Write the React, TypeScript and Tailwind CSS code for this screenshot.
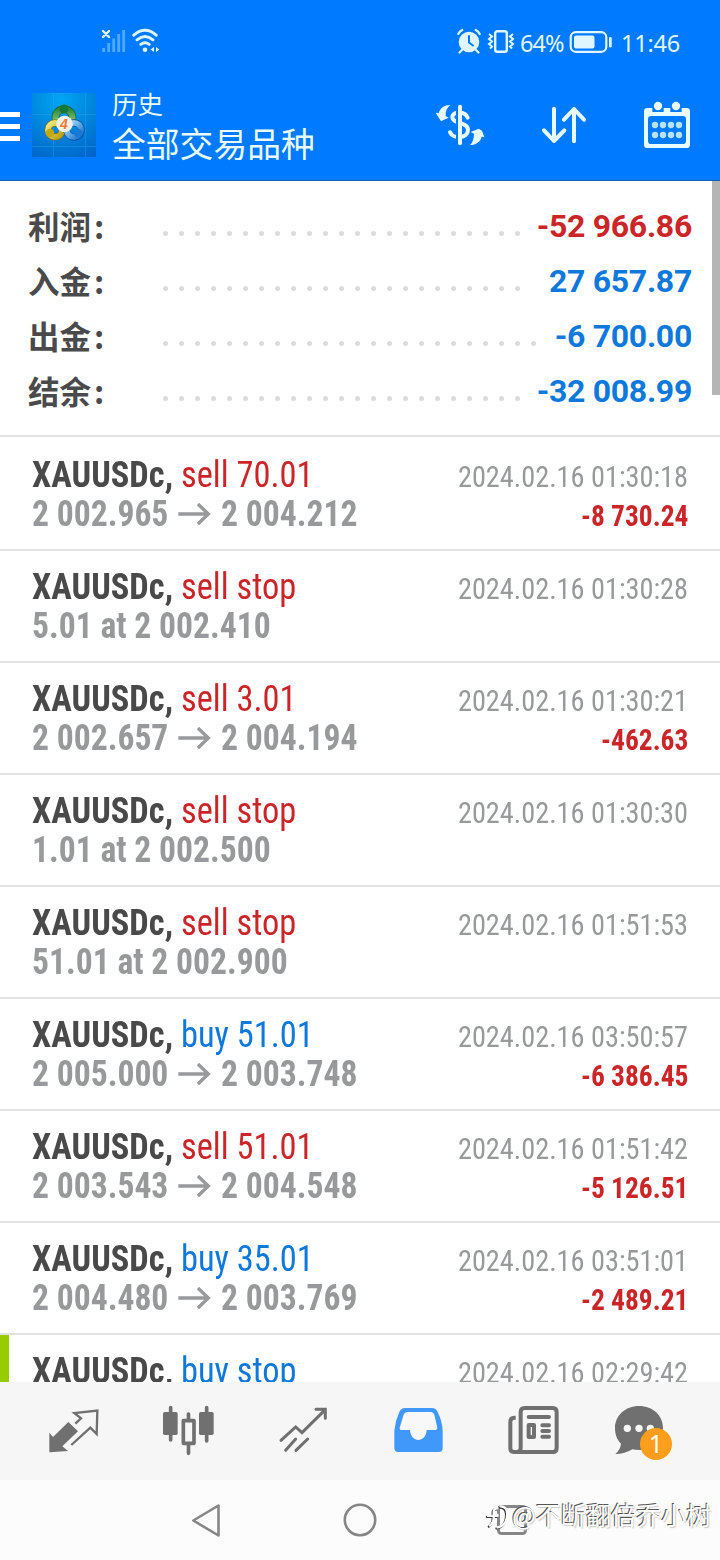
import React from "react";

type Summary = { label: string; value: string; dots: number; tone: string };
type Deal = { side: string; tone: string; detail: string; to?: string; time: string; profit?: string; marked?: boolean };

const RED = "text-[#cb2528]";
const BLUE = "text-[#0f78dc]";

const summary: Summary[] = [
  { label: "利润", value: "-52 966.86", dots: 23, tone: RED },
  { label: "入金", value: "27 657.87", dots: 23, tone: BLUE },
  { label: "出金", value: "-6 700.00", dots: 24, tone: BLUE },
  { label: "结余", value: "-32 008.99", dots: 23, tone: BLUE },
];

const deals: Deal[] = [
  { side: "sell 70.01", tone: RED, detail: "2 002.965", to: "2 004.212", time: "2024.02.16 01:30:18", profit: "-8 730.24" },
  { side: "sell stop", tone: RED, detail: "5.01 at 2 002.410", time: "2024.02.16 01:30:28" },
  { side: "sell 3.01", tone: RED, detail: "2 002.657", to: "2 004.194", time: "2024.02.16 01:30:21", profit: "-462.63" },
  { side: "sell stop", tone: RED, detail: "1.01 at 2 002.500", time: "2024.02.16 01:30:30" },
  { side: "sell stop", tone: RED, detail: "51.01 at 2 002.900", time: "2024.02.16 01:51:53" },
  { side: "buy 51.01", tone: BLUE, detail: "2 005.000", to: "2 003.748", time: "2024.02.16 03:50:57", profit: "-6 386.45" },
  { side: "sell 51.01", tone: RED, detail: "2 003.543", to: "2 004.548", time: "2024.02.16 01:51:42", profit: "-5 126.51" },
  { side: "buy 35.01", tone: BLUE, detail: "2 004.480", to: "2 003.769", time: "2024.02.16 03:51:01", profit: "-2 489.21" },
  { side: "buy stop", tone: BLUE, detail: "", time: "2024.02.16 02:29:42", marked: true },
];

function StatusBar() {
  return (
    <div className="flex h-[83px] items-start justify-between pt-[28px] pr-[39px] pl-[101px] text-[#e0f6ff]">
      <div className="flex gap-[6px]">
        <svg width="25" height="26" viewBox="0 0 25 26" fill="none">
          <path d="M2 3l6 6M8 3l-6 6" stroke="currentColor" strokeWidth="2.4" strokeLinecap="round" />
          <path d="M2.7 20v4M7.7 15v9M12.7 10.5v13.5M17.7 6v18M22.7 2v22" stroke="#4fa9ff" strokeWidth="2.8" />
        </svg>
        <svg width="28" height="26" viewBox="0 0 28 26" fill="none" stroke="currentColor" strokeWidth="2.900" strokeLinecap="round">
          <path d="M1.8 7.2Q13 -2.5 24.2 7.2M5 11.8q8-6.5 16 0M8.8 16.3q4.200-3.300 8.400 0" />
          <circle cx="13" cy="21.700" r="2.300" fill="currentColor" stroke="none" />
          <path d="M22 19v5l-3.500-2.500zM24 19v5l3.500-2.500z" fill="currentColor" stroke="none" />
        </svg>
      </div>
      <div className="flex items-start">
        <svg width="26" height="26" viewBox="0 0 26 26" fill="none">
          <circle cx="13" cy="14" r="10.300" fill="currentColor" />
          <path d="M2.300 6q1-2.500 4-4M23.700 6q-1-2.500-4-4M6 22l-2.500 2.500M20 22l2.500 2.500" stroke="currentColor" strokeWidth="2.200" strokeLinecap="round" />
          <path d="M13 8v6.500l4 3" stroke="#007aff" strokeWidth="2" strokeLinecap="round" />
        </svg>
        <svg className="ml-[5px]" width="28" height="26" viewBox="0 0 28 26" fill="none" stroke="currentColor">
          <rect x="8.200" y="3.200" width="11.600" height="20.600" rx="2" strokeWidth="2.400" />
          <path d="M2 6l3 2.500-3 2.500 3 2.500-3 2.500 3 2.500-2 2M26 6l-3 2.500 3 2.500-3 2.500 3 2.500-3 2.500 2 2" strokeWidth="2" />
        </svg>
        <span className="ml-[5px] w-[47px] font-['Noto_Sans'] text-[23.500px] leading-[30px] tracking-[-1px] whitespace-nowrap">64%</span>
        <svg className="ml-[2px]" width="44" height="28" viewBox="0 0 44 28" fill="none">
          <rect x="1.700" y="4.200" width="35.600" height="19.600" rx="5" stroke="currentColor" strokeWidth="2.200" />
          <rect x="5" y="7.500" width="20.500" height="13" rx="2" fill="currentColor" />
          <rect x="40" y="9" width="2.700" height="10.500" rx="1.300" fill="currentColor" />
        </svg>
        <span className="ml-[8px] w-[60px] font-['Noto_Sans'] text-[23.500px] leading-[30px] tracking-[-0.200px] whitespace-nowrap">11:46</span>
      </div>
    </div>
  );
}

function AppLogo() {
  return (
    <svg className="ml-[12px] shrink-0" width="64" height="64" viewBox="0 0 64 64">
      <defs>
        <radialGradient id="sky" cx=".45" cy=".1" r="1">
          <stop offset="0" stopColor="#00a6f4" />
          <stop offset=".6" stopColor="#0080d8" />
          <stop offset="1" stopColor="#0065cc" />
        </radialGradient>
        <linearGradient id="leaf" x2="0" y2="1"><stop stopColor="#2b8a3c" /><stop offset="1" stopColor="#a5d884" /></linearGradient>
        <linearGradient id="gold" x2="1" y2="1"><stop stopColor="#f6e97c" /><stop offset="1" stopColor="#b89d12" /></linearGradient>
        <linearGradient id="sea" x2="1" y2="1"><stop stopColor="#b4e2fb" /><stop offset="1" stopColor="#1270cc" /></linearGradient>
      </defs>
      <rect width="64" height="64" fill="url(#sky)" />
      <path d="M21.500 0v64M53.500 0v64M0 21.500h64M0 53.500h64" stroke="#35aaf0" strokeWidth=".8" opacity=".45" />
      <circle cx="32" cy="24.500" r="8.500" fill="none" stroke="#155c35" strokeWidth="7.600" />
      <circle cx="32" cy="24.500" r="8.500" fill="none" stroke="url(#leaf)" strokeWidth="6.200" />
      <circle cx="23" cy="37" r="7" fill="none" stroke="#776b13" strokeWidth="7" />
      <circle cx="23" cy="37" r="7" fill="none" stroke="url(#gold)" strokeWidth="5.800" />
      <circle cx="42" cy="37" r="7.200" fill="none" stroke="#05479a" strokeWidth="7" />
      <circle cx="42" cy="37" r="7.200" fill="none" stroke="url(#sea)" strokeWidth="5.800" />
      <circle cx="32" cy="16" r="4.500" fill="#167a36" />
      <circle cx="18" cy="40" r="4.200" fill="#c6a90d" />
      <circle cx="46" cy="40" r="4.200" fill="#1779d4" />
      <circle cx="32.500" cy="31" r="8.300" fill="#f3f1e8" />
      <text x="32" y="36" textAnchor="middle" fill="#ee7d3c" fontSize="14" fontWeight="700" fontStyle="italic" fontFamily="Liberation Sans, sans-serif">4</text>
    </svg>
  );
}

function Header() {
  return (
    <header className="h-[181px] shrink-0 border-b border-[#1660b8] bg-[#007aff]">
      <StatusBar />
      <div className="flex h-[84px] items-center">
        <div className="flex w-[20px] flex-col gap-[7px] pt-[2px]">
          <div className="h-[5px] bg-white" />
          <div className="h-[5px] bg-white" />
          <div className="h-[5px] bg-white" />
        </div>
        <AppLogo />
        <div className="ml-[16px] w-[306px] pb-px font-['Noto_Sans_CJK_SC',sans-serif] whitespace-nowrap text-[#e8fbff]">
          <div className="text-[25.500px] leading-[36px]">历史</div>
          <div className="text-[33.800px] leading-[44px]">全部交易品种</div>
        </div>
        <div className="ml-[17px] flex items-center gap-[56px] text-[#e8fcff]">
          <svg width="50" height="44" viewBox="45 54 150 132" fill="none">
            <path d="M143 98C136 78 96 76 97 98C98 116 144 110 144 135C144 160 100 164 90 142" stroke="currentColor" strokeWidth="12" strokeLinecap="round" />
            <path d="M112 54v132" stroke="#007aff" strokeWidth="8" />
            <path d="M120 65v110" stroke="currentColor" strokeWidth="12" strokeLinecap="round" />
            <path d="M91 60C72 60 60 70 56 85L47 83L63 109L86 98L77 93C76 78 81 68 91 60zM150 180c19 0 31-10 35-25l8 2L186 137l-10-6-24 10 10 5c0 15-4 26-12 34z" fill="currentColor" />
          </svg>
          <svg width="46" height="38" viewBox="363 63 138 114" fill="none" stroke="currentColor" strokeWidth="12" strokeLinecap="round" strokeLinejoin="round">
            <path d="M402 71v97M372 136l30 32 31-32M462 169V72M432 104l30-32 30 32" />
          </svg>
          <svg width="48" height="48" viewBox="669 45 144 144" fill="currentColor">
            <path fillRule="evenodd" d="M682 66h118q10 0 10 10v100q0 10-10 10H682q-10 0-10-10V76q0-10 10-10zM694 90q-10 0-10 10v64q0 10 10 10h94q10 0 10-10v-64q0-10-10-10z" />
            <path d="M697 60h34v18h-34zM751 60h34v18h-34z" fill="#007aff" />
            <circle cx="714" cy="60" r="12.500" /><circle cx="768" cy="60" r="12.500" />
            <g opacity=".8">
              <circle cx="705" cy="117" r="9.500" /><circle cx="729" cy="117" r="9.500" /><circle cx="753" cy="117" r="9.500" /><circle cx="777" cy="117" r="9.500" />
              <circle cx="705" cy="147" r="9.500" /><circle cx="729" cy="147" r="9.500" /><circle cx="753" cy="147" r="9.500" /><circle cx="777" cy="147" r="9.500" />
            </g>
          </svg>
        </div>
      </div>
    </header>
  );
}

function SummaryRow({ label, value, dots, tone }: Summary) {
  return (
    <div className="flex h-[55px] items-center pr-[28px] pl-[28px]">
      <div className="flex w-[135px] gap-[3px] pb-[3px] font-['Noto_Sans_CJK_SC',sans-serif] text-[31.500px] leading-[52px] font-bold text-[#4a4a4b]">
        <span>{label}</span>
        <span>:</span>
      </div>
      <div className="flex gap-[11px] pt-[14px]">
        {Array.from({ length: dots }, (_, i) => (
          <i key={i} className="size-[5px] rounded-full bg-[#dcdcdc]" />
        ))}
      </div>
      <span className={`ml-auto font-[Roboto] text-[32px] leading-[55px] font-bold tracking-[-0.300px] whitespace-nowrap ${tone}`}>{value}</span>
    </div>
  );
}

function DealRow({ side, tone, detail, to, time, profit, marked }: Deal) {
  return (
    <div className="flex h-[112px] shrink-0 border-b-2 border-[#e2e2e3]">
      <div className={`w-[9px] shrink-0 ${marked ? "bg-[#97cc00]" : ""}`} />
      <div className="flex-1 pt-[16px] pr-[32px] pl-[23px] font-[Roboto] font-stretch-condensed">
        <div className="flex h-[39px] items-baseline justify-between text-[37px] leading-[39px] whitespace-nowrap">
          <span className={`inline-block origin-left scale-x-[0.93] ${tone}`}><b className="font-bold text-[#49494a]">XAUUSDc,</b> {side}</span>
          <span className="inline-block origin-right scale-x-[0.943] text-[30px] text-[#97999a]">{time}</span>
        </div>
        <div className="flex h-[39px] items-baseline justify-between text-[37px] leading-[39px] font-bold whitespace-nowrap text-[#97999a]">
          <span className="inline-block origin-left scale-x-[0.908]">
            {detail}
            {to && (
              <>
                <svg className="mr-[10px] ml-[11px] inline-block align-[1px]" width="37" height="22" viewBox="0 0 34 22" preserveAspectRatio="none" fill="none" stroke="currentColor" strokeWidth="3.400">
                  <path d="M0 11h31M20 1l10.500 10L20 21" />
                </svg>
                {to}
              </>
            )}
          </span>
          {profit && <span className="inline-block origin-right scale-x-[0.915] text-[30px] text-[#cb2528]">{profit}</span>}
        </div>
      </div>
    </div>
  );
}

function TabBar() {
  return (
    <nav className="flex h-[98px] shrink-0 items-start bg-[#f6f6f6] pt-[23px] pl-[48px] text-[#707070]">
      <svg className="mt-[3px]" width="52" height="46" viewBox="144 264 156 138">
        <path d="M148 338l11 13 46-45 29 28-47 45 17 14-56 4z" fill="currentColor" />
        <path d="M226 311l17-16-20-16 69-7-2 70-19-19-57 52" fill="none" stroke="currentColor" strokeWidth="7" />
      </svg>
      <svg className="ml-[62px]" width="53" height="51" viewBox="486 255 159 153" fill="none" stroke="currentColor" strokeWidth="11" strokeLinecap="round">
        <path d="M512 263v97M620 263v100M565.500 282v15M565.500 376v24" />
        <rect x="489" y="276" width="44" height="69" rx="5" fill="currentColor" stroke="none" />
        <rect x="597" y="276" width="44" height="69" rx="5" fill="currentColor" stroke="none" />
        <rect x="550" y="302" width="32" height="68" strokeLinejoin="round" />
      </svg>
      <svg className="mt-[2px] ml-[63px]" width="50" height="46" viewBox="834 261 150 138" fill="none" stroke="currentColor" strokeWidth="9" strokeLinecap="round">
        <path d="M843 361l44-40 19 17 70-69M948 268h28v27M857 391l30-34M888 391l35-34" />
      </svg>
      <svg className="mt-[2px] ml-[65px]" width="51" height="46" viewBox="99 261 153 138">
        <path d="M135 264h81q12 0 17 12 14 28 15 56v52q0 12-12 12H115q-12 0-12-12v-52q2-28 15-56 5-12 17-12z" fill="#3f98fa" />
        <path d="M137 276h77q6 0 9 8l9 39q1 6-6 7h-26c-2 40-48 40-50 0h-24q-8 0-7-7l12-39q3-8 10-8z" fill="#f8f8f8" />
      </svg>
      <svg className="ml-[63px]" width="53" height="50" viewBox="441 255 159 150" fill="none" stroke="currentColor" strokeWidth="12">
        <path d="M467 293h-4q-12 0-12 12v80q0 11 11 11h116q12 0 12-12V276q0-12-12-12h-84q-12 0-12 12v109q0 11-11 11" />
        <path d="M506 291h61M547 316h20M547 333h20M547 350h20" strokeLinecap="round" />
        <rect x="506" y="315" width="16" height="36" strokeLinejoin="round" />
      </svg>
      <div className="relative ml-[54px] h-[56px] w-[58px]">
        <svg width="58" height="56" viewBox="762 255 174 168">
          <path d="M837 258c42 0 72 29 72 66 0 38-32 66-72 66q-10 0-20-2-22 14-51 14 15-13 17-31c-13-13-18-29-18-47 0-37 31-66 72-66z" fill="currentColor" />
          <circle cx="802" cy="325" r="11" fill="#f6f6f6" /><circle cx="837" cy="325" r="11" fill="#f6f6f6" /><circle cx="871" cy="325" r="11" fill="#f6f6f6" />
        </svg>
        <span className="absolute top-[23px] left-[26px] flex size-[32px] items-center justify-center rounded-full bg-[#ff9d1c] font-['Noto_Sans'] text-[25px] text-white">1</span>
      </div>
    </nav>
  );
}

function SystemNav() {
  return (
    <div className="relative flex h-[80px] shrink-0 items-center bg-[#fcfcfc] pl-[190px] text-[#868686]">
      <svg width="32" height="36" viewBox="0 0 32 36" fill="none" stroke="currentColor" strokeWidth="2.600" strokeLinejoin="round">
        <path d="M28.500 3.500v30L3.300 18.500z" />
      </svg>
      <svg className="ml-[121px]" width="34" height="34" viewBox="0 0 34 34" fill="none" stroke="currentColor" strokeWidth="2.600">
        <circle cx="17" cy="17" r="15.200" />
      </svg>
      <svg className="ml-[117px]" width="36" height="34" viewBox="0 0 36 34" fill="none" stroke="currentColor" strokeWidth="3">
        <rect x="4.500" y="3.500" width="27" height="27" rx="3" />
      </svg>
      <div className="absolute top-[15px] left-[486px] flex items-center text-white">
        <svg className="[filter:drop-shadow(-1px_1px_0px_#333)]" width="26" height="36" viewBox="0 0 27 36" fill="none" stroke="currentColor" strokeWidth="2.400" strokeLinecap="round">
          <path d="M2 20h10M4 30q4-3 4-8V16q0-4 4-4M15 10q7 0 7 8 0 12-10 14M12 19v.5" />
        </svg>
        <span className="font-['Noto_Sans_CJK_SC',sans-serif] text-[25px] leading-[38px] tracking-[0.100px] whitespace-nowrap [text-shadow:-1px_-1px_0px_#555,1px_1px_1px_#ccc]">@不断翻倍乔小树</span>
      </div>
    </div>
  );
}

export default function App() {
  return (
    <div className="flex h-[1560px] w-[720px] flex-col overflow-hidden bg-white">
      <Header />
      <main className="relative flex min-h-0 flex-1 flex-col overflow-hidden">
        <section className="h-[256px] shrink-0 border-b-2 border-[#e2e2e3] pt-[18px]">
          {summary.map((s) => <SummaryRow key={s.label} {...s} />)}
        </section>
        <section className="flex flex-col pt-[2px]">
          {deals.map((d) => <DealRow key={d.time} {...d} />)}
        </section>
        <div className="absolute top-0 right-0 h-[214px] w-[8px] bg-[#b5b5b5]" />
      </main>
      <TabBar />
      <SystemNav />
    </div>
  );
}
